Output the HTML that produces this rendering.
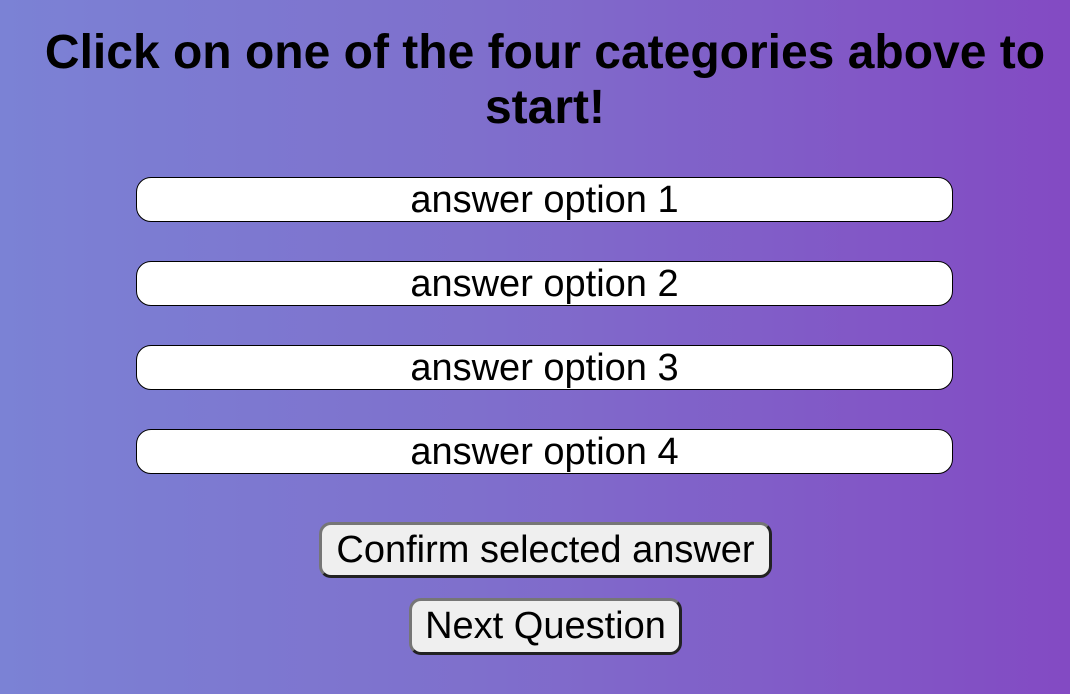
<!DOCTYPE html>
<html><head><style>
html,body{margin:0;padding:0;}
body{width:1070px;height:694px;overflow:hidden;background:linear-gradient(90deg,#7b82d5 0%,#7f6fcc 45%,#834ac3 100%);font-family:"Liberation Sans",Arial,sans-serif;position:relative;}
h1{position:absolute;left:0;width:1090px;top:25px;margin:0;text-align:center;font-size:48px;line-height:55px;font-weight:bold;color:#000;}
.opt{position:absolute;left:136px;width:815px;height:43px;background:#fff;border:1.5px solid #000;border-radius:15px;text-align:center;font-size:38px;line-height:44px;color:#000;}
.btn{position:absolute;background:#efefef;border:3px solid;border-color:#767676 #222 #222 #767676;border-radius:12px;font-size:38px;text-align:center;color:#000;box-sizing:border-box;white-space:nowrap;}
</style></head><body>
<h1>Click on one of the four categories above to<br>start!</h1>
<div class="opt" style="top:177px">answer option 1</div>
<div class="opt" style="top:261px">answer option 2</div>
<div class="opt" style="top:345px">answer option 3</div>
<div class="opt" style="top:429px">answer option 4</div>
<div class="btn" style="left:319px;top:522px;width:453px;height:56px;line-height:50px">Confirm selected answer</div>
<div class="btn" style="left:409px;top:598px;width:273px;height:57px;line-height:51px">Next Question</div>
</body></html>
